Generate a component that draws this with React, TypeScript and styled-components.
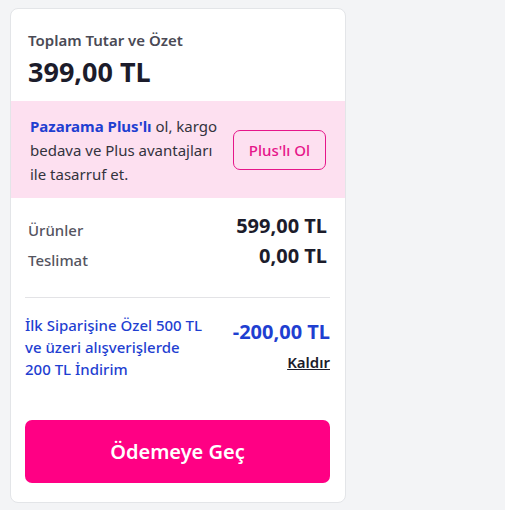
import React from "react";
import styled, { createGlobalStyle } from "styled-components";

const Global = createGlobalStyle`
  html, body { margin: 0; padding: 0; background: #f3f4f6; }
  body { font-family: "Noto Sans", "Open Sans", sans-serif; }
  * { box-sizing: border-box; }
`;

const Page = styled.div`
  padding: 8px 0 0 10px;
  width: 505px;
  height: 510px;
`;

const Card = styled.div`
  width: 336px;
  height: 495px;
  background: #fff;
  border: 1px solid #e3e5e8;
  border-radius: 8px;
  display: flex;
  flex-direction: column;
  overflow: hidden;
`;

const Header = styled.div`
  padding: 21px 17px 12px;
`;

const Caption = styled.div`
  font-size: 15px;
  font-weight: 600;
  color: #4a4a55;
  line-height: 20px;
`;

const Total = styled.div`
  font-size: 27px;
  font-weight: 700;
  color: #1c1c2b;
  line-height: 34px;
  margin-top: 5px;
`;

const PlusBand = styled.div`
  background: #fde0f0;
  height: 97px;
  padding: 0 19px 0 19px;
  display: flex;
  align-items: center;
  justify-content: space-between;
`;

const PlusText = styled.div`
  width: 196px;
  font-size: 15px;
  line-height: 24px;
  color: #33333d;
`;

const Strong = styled.span`
  color: #1f3fd1;
  font-weight: 700;
`;

const OutlineButton = styled.button`
  width: 93px;
  height: 40px;
  border: 1px solid #e6168a;
  border-radius: 7px;
  background: transparent;
  color: #e6168a;
  font-family: inherit;
  font-size: 15px;
  font-weight: 500;
  padding: 0;
`;

const Body = styled.div`
  padding: 14px 15px 0 14px;
  display: flex;
  flex-direction: column;
  flex: 1;
`;

const Row = styled.div`
  display: flex;
  justify-content: space-between;
  align-items: flex-start;
  padding: 0 3px;
  height: 30px;
`;

const Label = styled.div`
  font-size: 15px;
  font-weight: 500;
  color: #55555f;
  padding-top: 7px;
  line-height: 22px;
`;

const Value = styled.div`
  font-size: 20px;
  font-weight: 700;
  color: #1c1c2b;
  line-height: 28px;
`;

const Divider = styled.hr`
  border: none;
  border-top: 1px solid #e3e3e6;
  margin: 25px 0 16px;
`;

const Discount = styled.div`
  display: flex;
  justify-content: space-between;
  align-items: flex-start;
`;

const DiscountText = styled.div`
  width: 182px;
  font-size: 15px;
  font-weight: 500;
  line-height: 22px;
  color: #1f3fd1;
`;

const DiscountSide = styled.div`
  display: flex;
  flex-direction: column;
  align-items: flex-end;
  padding-top: 4px;
`;

const DiscountValue = styled.div`
  font-size: 20px;
  font-weight: 700;
  color: #1f3fd1;
  line-height: 28px;
`;

const RemoveLink = styled.a`
  margin-top: 6px;
  font-size: 15px;
  font-weight: 600;
  color: #1c1c2b;
  text-decoration: underline;
  line-height: 20px;
`;

const PayButton = styled.button`
  margin-top: auto;
  margin-bottom: 19px;
  height: 63px;
  width: 100%;
  border: none;
  border-radius: 7px;
  background: #ff0084;
  color: #fff;
  font-family: inherit;
  font-size: 20px;
  font-weight: 600;
`;

export default function App() {
  return (
    <>
      <Global />
      <Page>
        <Card>
          <Header>
            <Caption>Toplam Tutar ve Özet</Caption>
            <Total>399,00 TL</Total>
          </Header>
          <PlusBand>
            <PlusText>
              <Strong>Pazarama Plus'lı</Strong> ol, kargo bedava ve Plus avantajları ile tasarruf et.
            </PlusText>
            <OutlineButton>Plus'lı Ol</OutlineButton>
          </PlusBand>
          <Body>
            <Row>
              <Label>Ürünler</Label>
              <Value>599,00 TL</Value>
            </Row>
            <Row>
              <Label>Teslimat</Label>
              <Value>0,00 TL</Value>
            </Row>
            <Divider />
            <Discount>
              <DiscountText>İlk Siparişine Özel 500 TL ve üzeri alışverişlerde 200 TL İndirim</DiscountText>
              <DiscountSide>
                <DiscountValue>-200,00 TL</DiscountValue>
                <RemoveLink>Kaldır</RemoveLink>
              </DiscountSide>
            </Discount>
            <PayButton>Ödemeye Geç</PayButton>
          </Body>
        </Card>
      </Page>
    </>
  );
}
